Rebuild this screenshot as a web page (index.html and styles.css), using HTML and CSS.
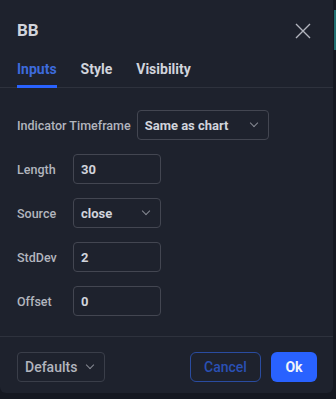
FILE: index.html
```html
<!DOCTYPE html>
<html lang="en">
<head>
  <meta charset="UTF-8">
  <title>BB</title>
  <link rel="stylesheet" href="styles.css">
</head>
<body>
  <div class="edge"></div>
  <div class="dialog">
    <div class="header">
      <h1>BB</h1>
      <button class="close" aria-label="Close">
        <svg width="16" height="16" viewBox="0 0 16 16"><path d="M1 1L15 15M15 1L1 15" stroke="#b2b5be" stroke-width="1.4" fill="none"/></svg>
      </button>
    </div>
    <div class="tabs">
      <span class="tab active">Inputs</span>
      <span class="tab">Style</span>
      <span class="tab">Visibility</span>
    </div>
    <div class="body">
      <div class="row">
        <label>Indicator Timeframe</label>
        <div class="field select wide">Same as chart <span class="chev"></span></div>
      </div>
      <div class="row">
        <label class="short">Length</label>
        <div class="field">30</div>
      </div>
      <div class="row">
        <label class="short">Source</label>
        <div class="field select">close <span class="chev"></span></div>
      </div>
      <div class="row">
        <label class="short">StdDev</label>
        <div class="field">2</div>
      </div>
      <div class="row">
        <label class="short">Offset</label>
        <div class="field">0</div>
      </div>
    </div>
    <div class="footer">
      <div class="field select defaults">Defaults <span class="chev"></span></div>
      <div class="actions">
        <button class="btn cancel">Cancel</button>
        <button class="btn ok">Ok</button>
      </div>
    </div>
  </div>
</body>
</html>
```
FILE: styles.css
```css
body {
  margin: 0;
  width: 336px;
  height: 399px;
  background-color: #151821;
  font-family: Roboto, sans-serif;
  position: relative;
  overflow: hidden;
}

.edge {
  position: absolute;
  right: 0;
  top: 10px;
  width: 2px;
  height: 40px;
  background-color: #1f6f72;
}

.dialog {
  width: 333px;
  height: 393px;
  background-color: #1e222d;
  border-radius: 0 0 6px 6px;
  display: flex;
  flex-direction: column;
}

.header {
  display: flex;
  justify-content: space-between;
  align-items: center;
  padding: 17px 22px 0 17px;
  height: 26px;
}

.header h1 {
  margin: 0;
  font-size: 17px;
  font-weight: 700;
  color: #d1d4dc;
}

.close {
  background: none;
  border: none;
  padding: 0;
  width: 16px;
  height: 16px;
  margin-top: 2px;
}

.tabs {
  display: flex;
  gap: 24px;
  padding: 0 17px;
  margin-top: 12px;
  border-bottom: 1px solid #2e323d;
}

.tab {
  font-size: 14px;
  font-weight: 700;
  color: #d1d4dc;
  padding: 6px 0 8px;
  border-bottom: 3px solid transparent;
  margin-bottom: -1px;
}

.tab.active {
  color: #3d6bdc;
  border-bottom-color: #2962ff;
}

.body {
  flex: 1;
  padding: 22px 17px 0;
  display: flex;
  flex-direction: column;
  gap: 14px;
  border-bottom: 1px solid #2e323d;
}

.row {
  display: flex;
  align-items: center;
  height: 30px;
}

label {
  font-size: 12.5px;
  font-weight: 500;
  color: #b2b5be;
  margin-right: 6px;
}

label.short {
  width: 56px;
  margin-right: 0;
}

.field {
  box-sizing: border-box;
  width: 88px;
  height: 30px;
  border: 1px solid #434651;
  border-radius: 4px;
  padding: 0 7px;
  display: flex;
  align-items: center;
  justify-content: space-between;
  font-size: 13px;
  font-weight: 700;
  color: #d1d4dc;
}

.field.wide {
  width: 132px;
}

.chev {
  width: 5px;
  height: 5px;
  border-right: 1px solid #868993;
  border-bottom: 1px solid #868993;
  transform: rotate(45deg);
  margin: -4px 4px 0 0;
}

.footer {
  box-sizing: border-box;
  display: flex;
  justify-content: space-between;
  align-items: center;
  padding: 4px 16px 0 17px;
  height: 56px;
}

.defaults {
  width: 88px;
  color: #b2b5be;
  font-weight: 500;
  font-size: 14px;
  border-color: #3a3e49;
}

.actions {
  display: flex;
  gap: 10px;
}

.btn {
  font-family: Roboto, sans-serif;
  height: 30px;
  border-radius: 6px;
  font-size: 14px;
  font-weight: 500;
  padding: 0;
}

.cancel {
  width: 71px;
  background: none;
  border: 1px solid #2a4ca0;
  color: #2a50b4;
}

.ok {
  width: 46px;
  background-color: #2962ff;
  border: none;
  color: #f0f3fa;
  font-weight: 700;
}
```
